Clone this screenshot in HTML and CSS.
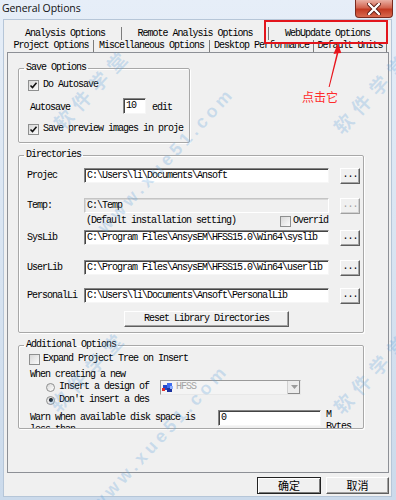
FILE: index.html
```html
<!DOCTYPE html>
<html lang="en">
<head>
    <meta charset="UTF-8">
    <meta name="viewport" content="width=device-width, initial-scale=1.0">
    <title>General Options</title>
    <link rel="stylesheet" href="styles.css">
</head>
<body>
    <div class="window">

        <!-- Title bar -->
        <div class="titlebar">
            <span class="title">General Options</span>
            <div class="close-btn">
                <svg width="14" height="12" viewBox="0 0 14 12">
                    <path d="M2 1 L12 11 M12 1 L2 11" stroke="#5a1a12" stroke-width="4" stroke-linecap="round"/>
                    <path d="M2 1 L12 11 M12 1 L2 11" stroke="#fff" stroke-width="2.4" stroke-linecap="round"/>
                </svg>
            </div>
        </div>

        <div class="client">

            <!-- Tabs -->
            <div class="tab-row row-back">
                <div class="tab t-analysis">Analysis Options</div>
                <div class="tab t-remote">Remote Analysis Options</div>
                <div class="tab t-web">WebUpdate Options</div>
            </div>
            <div class="tab-row row-front">
                <div class="tab t-project active">Project Options</div>
                <div class="tab t-misc">Miscellaneous Options</div>
                <div class="tab t-desktop">Desktop Performance</div>
                <div class="tab t-units">Default Units</div>
            </div>

            <div class="panel">

                <!-- Save Options -->
                <fieldset class="group save-group">
                    <legend>Save Options</legend>
                    <div class="check-row first">
                        <span class="check">
                            <svg width="9" height="9" viewBox="0 0 9 9"><path d="M1.5 4.5 L3.5 6.5 L7.5 1.8" fill="none" stroke="#111" stroke-width="1.6"/></svg>
                        </span>
                        <span>Do Autosave</span>
                    </div>
                    <div class="autosave-row">
                        <span class="autosave-label">Autosave</span>
                        <div class="edit autosave-edit">10</div>
                        <span class="unit">edit</span>
                    </div>
                    <div class="check-row second">
                        <span class="check">
                            <svg width="9" height="9" viewBox="0 0 9 9"><path d="M1.5 4.5 L3.5 6.5 L7.5 1.8" fill="none" stroke="#111" stroke-width="1.6"/></svg>
                        </span>
                        <span>Save preview images in proje</span>
                    </div>
                </fieldset>

                <!-- Directories -->
                <fieldset class="group dir-group">
                    <legend>Directories</legend>
                    <div class="dir-row r-project">
                        <span class="dir-label">Projec</span>
                        <div class="edit dir-edit">C:\Users\li\Documents\Ansoft</div>
                        <div class="btn browse">...</div>
                    </div>
                    <div class="dir-row r-temp">
                        <span class="dir-label">Temp:</span>
                        <div class="edit dir-edit disabled">C:\Temp</div>
                        <div class="btn browse disabled">...</div>
                    </div>
                    <div class="temp-note">
                        <span class="note-text">(Default installation setting)</span>
                        <span class="check"></span>
                        <span>Overrid</span>
                    </div>
                    <div class="dir-row r-syslib">
                        <span class="dir-label">SysLib</span>
                        <div class="edit dir-edit">C:\Program Files\AnsysEM\HFSS15.0\Win64\syslib</div>
                        <div class="btn browse">...</div>
                    </div>
                    <div class="dir-row r-userlib">
                        <span class="dir-label">UserLib</span>
                        <div class="edit dir-edit">C:\Program Files\AnsysEM\HFSS15.0\Win64\userlib</div>
                        <div class="btn browse">...</div>
                    </div>
                    <div class="dir-row r-personal">
                        <span class="dir-label">PersonalLi</span>
                        <div class="edit dir-edit">C:\Users\li\Documents\Ansoft\PersonalLib</div>
                        <div class="btn browse">...</div>
                    </div>
                    <div class="btn reset-btn">Reset Library Directories</div>
                </fieldset>

                <!-- Additional Options -->
                <fieldset class="group more-group">
                    <legend>Additional Options</legend>
                    <div class="more-body">
                        <div class="expand-row">
                            <span class="check"></span>
                            <span>Expand Project Tree on Insert</span>
                        </div>
                        <div class="when-line">When creating a new</div>
                        <div class="radio-row insert-row">
                            <span class="radio"></span>
                            <span class="radio-label">Insert a design of</span>
                            <div class="combo">
                                <svg class="hfss-icon" width="12" height="11" viewBox="0 0 12 11">
                                    <rect x="1" y="3" width="5" height="5" fill="#2347c9"/>
                                    <rect x="5" y="1" width="5" height="5" fill="#3c6cf0"/>
                                    <rect x="5" y="6" width="5" height="4" fill="#1c34a0"/>
                                    <rect x="0" y="6" width="3" height="3" fill="#e02a2a"/>
                                    <rect x="8" y="4" width="3" height="3" fill="#8fb0ff"/>
                                </svg>
                                <span class="combo-text">HFSS</span>
                                <div class="combo-arrow">
                                    <svg width="7" height="4" viewBox="0 0 7 4"><path d="M0 0 H7 L3.5 4 Z" fill="#9a9a9a"/></svg>
                                </div>
                            </div>
                        </div>
                        <div class="radio-row">
                            <span class="radio checked"><span class="dot"></span></span>
                            <span class="radio-label">Don't insert a des</span>
                        </div>
                        <div class="warn-row">
                            <span class="warn-label">Warn when available disk space is less than</span>
                            <div class="edit warn-edit">0</div>
                            <span class="mbytes">M Bytes</span>
                        </div>
                    </div>
                </fieldset>

            </div>

            <!-- OK / Cancel -->
            <div class="dialog-buttons">
                <div class="btn dlg-btn default">确定</div>
                <div class="btn dlg-btn cancel">取消</div>
            </div>
        </div>

        <!-- Annotation -->
        <div class="mark-box"></div>
        <svg class="mark-arrow" width="30" height="50" viewBox="0 0 30 50">
            <path d="M22 0 L17.5 11 L20.6 10.6 L12.6 44 L13.6 44 L22.3 10.3 L25.3 10 Z" fill="#e8161e"/>
        </svg>
        <span class="mark-note">点击它</span>

        <!-- Watermark -->
        <span class="wm wm-cn wm-a">软件学堂</span>
        <span class="wm wm-cn wm-b">软件学堂</span>
        <span class="wm wm-cn wm-c">软件学堂</span>
        <span class="wm wm-cn wm-d">软件学堂</span>
        <span class="wm wm-url wm-e">www.xue51.com</span>
        <span class="wm wm-url wm-f">www.xue51.com</span>
    </div>
</body>
</html>
```

FILE: styles.css
```css
* {
    box-sizing: border-box;
}

body {
    margin: 0;
    font-family: "Liberation Mono", monospace;
    font-size: 10px;
    letter-spacing: -1px;
    line-height: 12px;
    color: #000;
}

.window {
    position: relative;
    width: 396px;
    height: 500px;
    overflow: hidden;
    background: linear-gradient(#e6eef8, #cbdaeb);
}

/* title bar */
.titlebar {
    position: relative;
    height: 19px;
}

.title {
    display: block;
    padding-left: 2px;
    font-family: "Open Sans", sans-serif;
    font-size: 10.5px;
    letter-spacing: -0.1px;
    line-height: 16px;
    color: #111;
}

.close-btn {
    position: absolute;
    right: 3px;
    top: 0;
    width: 38px;
    height: 18px;
    display: flex;
    align-items: center;
    justify-content: center;
    background: linear-gradient(#eab0a4, #d2644f 45%, #c23a22 55%, #d86a4f);
    border: 1px solid #7a2a1e;
    border-top: none;
    border-radius: 0 0 4px 4px;
}

/* client area */
.client {
    margin: 0 4px 3px 3px;
    height: 478px;
    border: 1px solid #b6c6d8;
    background: #f0f0f0;
    padding: 7px 0 0 3px;
}

.tab-row {
    display: flex;
    margin-left: 2px;
}

.tab {
    text-align: center;
    white-space: nowrap;
    border-right: 1px solid #7c7c7c;
}

.row-back .tab {
    height: 13px;
    line-height: 14px;
}

.row-front .tab {
    height: 12px;
    line-height: 12px;
}

.t-analysis { width: 113px; }
.t-remote { width: 147px; }
.t-web { width: 117px; border-right: none; }
.t-project { width: 85px; }
.t-misc { width: 116px; }
.t-desktop { width: 104px; }
.t-units { width: 73px; }

.panel {
    width: 382px;
    height: 421px;
    border: 1px solid #8d9096;
    padding: 9px 0 0 10px;
}

/* group boxes */
.group {
    margin: 0;
    padding: 0;
    min-width: 0;
    border: 1px solid #a8a8a8;
    border-radius: 2px;
    box-shadow: inset 1px 1px 0 #fff, 1px 1px 0 #fff;
}

.group legend {
    padding: 0 2px;
    margin-left: 5px;
    line-height: 12px;
}

.save-group {
    width: 172px;
    height: 81px;
}

.dir-group {
    width: 346px;
    height: 184px;
    margin-top: 6px;
}

.more-group {
    width: 346px;
    height: 90px;
    margin-top: 6px;
}

/* controls */
.check {
    width: 11px;
    height: 11px;
    flex: none;
    display: inline-flex;
    align-items: center;
    justify-content: center;
    border: 1px solid #8e8f8f;
    background: linear-gradient(135deg, #d8d8d8, #fbfbfb);
}

.radio {
    width: 9px;
    height: 9px;
    flex: none;
    display: inline-flex;
    align-items: center;
    justify-content: center;
    border: 1px solid #8e8f8f;
    border-radius: 50%;
    background: linear-gradient(135deg, #d8d8d8, #fff);
}

.radio .dot {
    width: 4px;
    height: 4px;
    border-radius: 50%;
    background: #111;
}

.edit {
    height: 15px;
    background: #fff;
    border: 1px solid;
    border-color: #858585 #f6f6f6 #f6f6f6 #858585;
    box-shadow: inset 1px 1px 0 #444;
    padding: 1px 0 0 2px;
    line-height: 12px;
    white-space: nowrap;
    overflow: hidden;
}

.edit.disabled {
    background: #f0f0f0;
    border-color: #c4c4c4 #fff #fff #c4c4c4;
    box-shadow: inset 1px 1px 0 #d8d8d8;
}

.btn {
    display: flex;
    align-items: center;
    justify-content: center;
    background: #f0f0f0;
    border: 1px solid;
    border-color: #fff #5e5e5e #5e5e5e #fff;
    box-shadow: inset -1px -1px 0 #a2a2a2;
    white-space: nowrap;
}

.btn.disabled {
    color: #a0a0a0;
    border-color: #fff #a0a0a0 #a0a0a0 #fff;
    box-shadow: inset -1px -1px 0 #d0d0d0;
}

/* save options */
.check-row {
    display: flex;
    align-items: center;
    gap: 4px;
    height: 14px;
    padding-left: 9px;
    white-space: nowrap;
}

.check-row.first { margin-top: 4px; }
.check-row.second { margin-top: 8px; }

.autosave-row {
    display: flex;
    align-items: center;
    height: 16px;
    margin-top: 6px;
    padding-left: 11px;
}

.autosave-label {
    width: 93px;
    padding-top: 3px;
}

.autosave-edit {
    width: 23px;
    height: 16px;
}

.unit {
    margin-left: 6px;
    padding-top: 3px;
}

/* directories */
.dir-row {
    display: flex;
    align-items: flex-start;
    height: 16px;
    padding-left: 8px;
}

.r-project { margin-top: 7px; }
.r-temp { margin-top: 14px; }
.r-syslib { margin-top: 3px; }
.r-userlib { margin-top: 14px; }
.r-personal { margin-top: 12px; }

.dir-label {
    width: 57px;
    padding-top: 2px;
    overflow: hidden;
    white-space: nowrap;
}

.dir-edit {
    width: 245px;
}

.browse {
    width: 20px;
    height: 16px;
    margin-left: 11px;
    padding-bottom: 3px;
}

.temp-note {
    display: flex;
    align-items: center;
    height: 12px;
    margin-top: 1px;
    padding-left: 67px;
    white-space: nowrap;
}

.note-text {
    width: 194px;
}

.temp-note .check {
    margin-right: 2px;
}

.reset-btn {
    width: 165px;
    height: 16px;
    margin: 7px 0 0 105px;
}

/* additional options */
.more-body {
    height: 77px;
    padding-top: 2px;
    overflow: hidden;
}

.expand-row {
    display: flex;
    align-items: center;
    gap: 3px;
    height: 12px;
    padding-left: 10px;
    white-space: nowrap;
}

.when-line {
    margin-top: 4px;
    padding-left: 11px;
}

.radio-row {
    display: flex;
    align-items: center;
    height: 12px;
    padding-left: 27px;
    white-space: nowrap;
}

.insert-row {
    height: 14px;
    margin-top: -1px;
}

.radio-label {
    margin-left: 4px;
    width: 101px;
}

.combo {
    display: flex;
    align-items: center;
    width: 141px;
    height: 15px;
    background: #f4f4f4;
    border: 1px solid;
    border-color: #9a9a9a #e8e8e8 #e8e8e8 #9a9a9a;
    padding-left: 1px;
}

.hfss-icon {
    flex: none;
}

.combo-text {
    margin-left: 2px;
    color: #a3a3a3;
    flex: 1;
}

.combo-arrow {
    width: 13px;
    height: 13px;
    display: flex;
    align-items: center;
    justify-content: center;
    background: #ececec;
    border-left: 1px solid #d0d0d0;
    box-shadow: inset -1px -1px 0 #8a8a8a;
}

.warn-row {
    display: flex;
    align-items: flex-start;
    margin-top: 4px;
    padding-left: 11px;
}

.warn-label {
    width: 188px;
    margin-top: 2px;
}

.warn-edit {
    width: 103px;
    height: 16px;
}

.mbytes {
    width: 30px;
    margin: -1px 0 0 5px;
}

/* dialog buttons */
.dialog-buttons {
    display: flex;
    justify-content: flex-end;
    gap: 5px;
    margin-top: 4px;
    padding-right: 2px;
}

.dlg-btn {
    height: 17px;
    font-family: "Noto Sans CJK SC", sans-serif;
    font-size: 11px;
    letter-spacing: 0;
    line-height: 15px;
}

.dlg-btn.default {
    width: 64px;
    outline: 1px solid #222;
    outline-offset: -1px;
    border-color: #222;
    box-shadow: inset 1px 1px 0 #fff, inset -1px -1px 0 #7a7a7a;
}

.dlg-btn.cancel {
    width: 63px;
}

/* annotation overlay */
.mark-box {
    position: absolute;
    left: 264px;
    top: 20px;
    width: 124px;
    height: 24px;
    border: 2px solid #e3151c;
}

.mark-arrow {
    position: absolute;
    left: 316px;
    top: 43px;
}

.mark-note {
    position: absolute;
    left: 302px;
    top: 89px;
    font-family: "Noto Sans CJK SC", sans-serif;
    font-size: 12px;
    letter-spacing: 0;
    line-height: 16px;
    color: #ff2b2b;
}

/* watermark */
.wm {
    position: absolute;
    transform: translate(-50%, -50%) rotate(-47deg);
    white-space: nowrap;
    color: rgba(100, 165, 220, 0.28);
    font-weight: bold;
    pointer-events: none;
}

.wm-cn {
    font-family: "Noto Sans CJK SC", sans-serif;
    font-size: 19px;
    letter-spacing: 7px;
    line-height: 22px;
}

.wm-url {
    font-family: "Liberation Sans", sans-serif;
    font-size: 18px;
    letter-spacing: 4px;
    line-height: 20px;
}

.wm-a { left: 92px; top: 88px; }
.wm-b { left: 88px; top: 370px; }
.wm-c { left: 372px; top: 92px; }
.wm-d { left: 372px; top: 372px; }
.wm-e { left: 166px; top: 160px; }
.wm-f { left: 160px; top: 437px; }
```
